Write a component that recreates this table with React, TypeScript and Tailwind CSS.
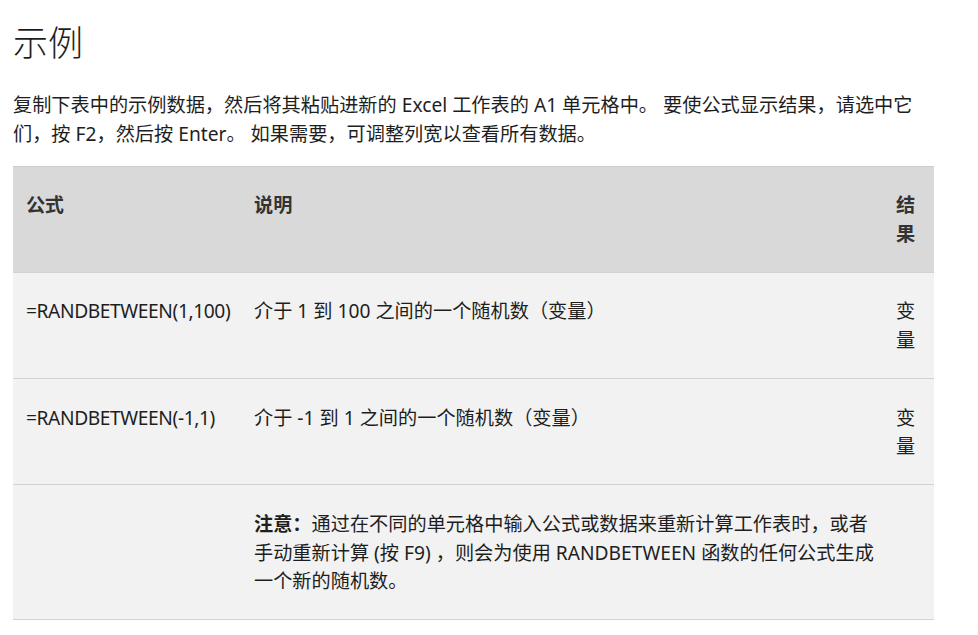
import React from "react";

const font = {
  fontFamily: '"Segoe UI", "Noto Sans", "Noto Sans CJK SC", sans-serif',
};

function Row({
  cells,
  header = false,
}: {
  cells: React.ReactNode[];
  header?: boolean;
}) {
  return (
    <div
      className={`grid grid-cols-[228px_642px_51px] border-b border-[#d2d2d2] ${
        header ? "bg-[#d9d9d9] font-bold text-[#333333]" : "bg-[#f2f2f2] text-[#1e1e1e]"
      }`}
    >
      {cells.map((c, i) => (
        <div
          key={i}
          className={`pl-[13px] pr-[13px] pt-[24.6px] pb-[23px] ${
            i === 0 ? "whitespace-nowrap tracking-[-0.4px]" : "break-words"
          }`}
        >
          {c}
        </div>
      ))}
    </div>
  );
}

export default function App() {
  return (
    <div
      className="w-[978px] h-[635px] bg-white overflow-hidden px-[13px] text-[19.2px] leading-[28.8px] text-[#1e1e1e]"
      style={font}
    >
      <h1 className="text-[35px] leading-[44px] font-light mt-[21px] text-[#1e1e1e]">示例</h1>
      <p className="mt-[26px] w-[905px]">
        复制下表中的示例数据，然后将其粘贴进新的 Excel 工作表的 A1 单元格中。 要使公式显示结果，请选中它们，按 F2，然后按 Enter。 如果需要，可调整列宽以查看所有数据。
      </p>
      <div className="mt-[17px] w-[921px] border-t border-[#cccccc]">
        <Row header cells={["公式", "说明", <span className="block w-[20px]">结果</span>]} />
        <Row cells={["=RANDBETWEEN(1,100)", "介于 1 到 100 之间的一个随机数（变量）", <span className="block w-[20px]">变量</span>]} />
        <Row cells={["=RANDBETWEEN(-1,1)", "介于 -1 到 1 之间的一个随机数（变量）", <span className="block w-[20px]">变量</span>]} />
        <Row
          cells={[
            "",
            <span className="block w-[626px]">
              <b>注意：</b>通过在不同的单元格中输入公式或数据来重新计算工作表时，或者手动重新计算 (按 F9) ，则会为使用 RANDBETWEEN 函数的任何公式生成一个新的随机数。
            </span>,
            "",
          ]}
        />
      </div>
    </div>
  );
}
